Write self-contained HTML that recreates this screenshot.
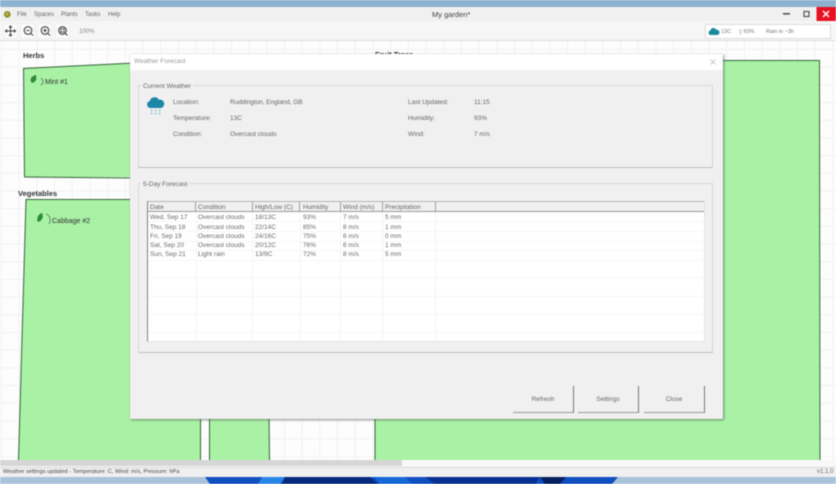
<!DOCTYPE html>
<html lang="en">
<head>
<meta charset="utf-8">
<title>My garden</title>
<style>
html,body{margin:0;padding:0;width:836px;height:484px;overflow:hidden;background:#fff}
body{position:relative;font-family:"Liberation Sans",sans-serif;font-size:6.5px;color:#666}
#root{position:absolute;left:0;top:0;width:836px;height:484px;overflow:hidden;filter:blur(.5px)}
.a{position:absolute;white-space:nowrap}
.lab{position:absolute;white-space:nowrap;line-height:8px}
.box{position:absolute;box-sizing:border-box}
.group{position:absolute;box-sizing:border-box;border:1px solid #d8d8d8;border-bottom-color:#bdbdbd;border-right-color:#d4d4d4;background:#f0f0f0}
.legend{position:absolute;background:#f0f0f0;padding:0 2px;line-height:8px;color:#666;white-space:nowrap}
.btn{position:absolute;box-sizing:border-box;top:386px;height:27px;background:#f0f0f0;border-right:1px solid #777;border-bottom:1px solid #999;text-align:center;line-height:27px;color:#666;font-size:6.5px}
.tool{position:absolute;top:23px;width:15px;height:16px;background:#fbfbfb;border:1px solid #efefef;box-sizing:border-box}
.th{position:absolute;top:203px;height:10px;line-height:10px;color:#666;white-space:nowrap}
.td{position:absolute;line-height:9px;color:#6a6a6a;white-space:nowrap}
.vl{position:absolute;width:1px;background:#a0a0a0;top:202px;height:10px}
.vg{position:absolute;width:1px;background:#f4f4f4;top:212px;height:128px}
.hg{position:absolute;height:1px;background:#f6f6f6;left:148px;width:555px}
</style>
</head>
<body>
<div id="root">

<!-- window chrome -->
<div class="box" style="left:0;top:0;width:836px;height:7px;background:#8db2cf"></div>
<div class="box" style="left:0;top:7px;width:836px;height:14px;background:#f0f0f0"></div>
<div class="box" style="left:0;top:21px;width:836px;height:20px;background:#f6f6f6;border-bottom:1px solid #dedede"></div>

<svg class="a" style="left:3px;top:10px" width="9" height="9" viewBox="0 0 9 9"><circle cx="4.3" cy="4.4" r="3.4" fill="#8b8f2e"/><circle cx="4" cy="4" r="1.4" fill="#c2b94a"/></svg>
<div class="a" style="left:17px;top:11px;line-height:8px;font-size:6px;color:#666">File</div>
<div class="a" style="left:34px;top:11px;line-height:8px;font-size:6px;color:#666">Spaces</div>
<div class="a" style="left:61px;top:11px;line-height:8px;font-size:6px;color:#666">Plants</div>
<div class="a" style="left:85px;top:11px;line-height:8px;font-size:6px;color:#666">Tasks</div>
<div class="a" style="left:108px;top:11px;line-height:8px;font-size:6px;color:#666">Help</div>
<div class="a" style="left:432px;top:9px;line-height:11px;font-size:7.5px;color:#444">My garden*</div>

<svg class="a" style="left:780px;top:7px" width="56" height="14" viewBox="0 0 56 14">
<rect x="3" y="6" width="7" height="1.6" fill="#555"/>
<rect x="24" y="4.5" width="5" height="5" fill="none" stroke="#555" stroke-width="1.2"/>
<rect x="36.5" y="0" width="19.5" height="14" fill="#e81123"/>
<path d="M43 4 L49 10 M49 4 L43 10" stroke="#fff" stroke-width="1.4"/>
</svg>

<!-- toolbar -->
<div class="tool" style="left:3px"></div>
<div class="tool" style="left:20px"></div>
<div class="tool" style="left:37px"></div>
<div class="tool" style="left:55px"></div>
<svg class="a" style="left:3px;top:23px" width="70" height="16" viewBox="0 0 70 16" fill="none" stroke="#444">
<path d="M7.5 3 V13 M2.5 8 H12.5" stroke-width="1"/>
<path d="M6 4.5 L7.5 3 L9 4.5 M6 11.5 L7.5 13 L9 11.5 M4 6.5 L2.5 8 L4 9.5 M11 6.5 L12.5 8 L11 9.5" stroke-width="1"/>
<circle cx="25" cy="7.5" r="3.8" stroke-width="1.1"/><path d="M28 10.5 L30 12.5 M23.2 7.5 H26.8" stroke-width="1.1"/>
<circle cx="42" cy="7.5" r="3.8" stroke-width="1.1"/><path d="M45 10.5 L47 12.5 M40.2 7.5 H43.8 M42 5.7 V9.3" stroke-width="1.1"/>
<circle cx="59.5" cy="7.5" r="3.8" stroke-width="1.1"/><path d="M62.5 10.5 L64.5 12.5" stroke-width="1.1"/><rect x="57.8" y="5.8" width="3.4" height="3.4" stroke-width=".9"/>
</svg>
<div class="a" style="left:79px;top:28px;line-height:8px;font-size:6px;color:#888">100%</div>

<!-- weather status widget -->
<div class="box" style="left:705px;top:24px;width:126px;height:15px;background:#fff;border:1px solid #dcdcdc"></div>
<svg class="a" style="left:708px;top:27px" width="12" height="9" viewBox="0 0 12 9"><path d="M2.5 8 A2.3 2.3 0 0 1 2.3 3.5 A3.2 3.2 0 0 1 8.3 2.8 A2.6 2.6 0 0 1 9.4 8 Z" fill="#1d8a9c"/></svg>
<div class="a" style="left:721px;top:28px;line-height:8px;font-size:5.5px;color:#777">13C</div>
<div class="a" style="left:739px;top:28px;line-height:8px;font-size:5.5px;color:#777">▯ 93%</div>
<div class="a" style="left:766px;top:28px;line-height:8px;font-size:5.5px;color:#777">Rain in ~3h</div>

<!-- canvas with grid -->
<div class="box" style="left:0;top:41px;width:836px;height:420px;background-color:#fdfdfd;background-image:linear-gradient(#f1f1f1 1px,transparent 1px),linear-gradient(90deg,#f1f1f1 1px,transparent 1px);background-size:17.7px 17.7px;background-position:1px 8px"></div>

<svg class="a" style="left:0;top:41px" width="836" height="420" viewBox="0 41 836 420">
<g fill="#a8f1a5" stroke="none">
<polygon points="23.5,68.5 135,63 135,177 24.5,177"/>
<polygon points="26,199.5 205,199.5 200.5,460 18.5,460"/>
<polygon points="209.5,400 269,400 269.5,460 209.5,460"/>
<polygon points="375.5,300 600,60.5 819.5,60.5 820,460 375,460"/>
</g>
<g fill="none" stroke="#35643a" stroke-width="1">
<path d="M24.5 177 L23.5 68.5 L135 63"/>
<path d="M24.5 177 L135 178"/>
<path d="M18.5 460 L26 199.5 L135 199.5"/>
<path d="M200.5 410 V460"/>
<path d="M209.5 410 V460"/>
<path d="M269 410 L269.5 460"/>
<path d="M375 410 V460"/>
<path d="M720 60.5 H819.5 L820 460"/>
</g>
<path d="M32 83 C29 80 31 76 36 75 C37 79 36 82 32 83 Z" fill="#2f8a3a"/>
<path d="M38 222 C36 219 38 214 42 213 C44 217 42 221 38 222 Z" fill="#2f8a3a"/>
<path d="M41 78 C44 80 43 84 41 85" fill="none" stroke="#444" stroke-width=".6"/>
<path d="M46 214 C51 216 51 221 49 224" fill="none" stroke="#444" stroke-width=".6"/>
</svg>
<div class="a" style="left:23px;top:51px;line-height:10px;font-size:7.5px;font-weight:bold;color:#333">Herbs</div>
<div class="a" style="left:18px;top:189px;line-height:10px;font-size:7.5px;font-weight:bold;color:#333">Vegetables</div>
<div class="a" style="left:375px;top:50px;line-height:10px;font-size:7.5px;font-weight:bold;color:#333">Fruit Trees</div>
<div class="a" style="left:45px;top:78px;line-height:9px;font-size:7px;color:#333">Mint #1</div>
<div class="a" style="left:52px;top:217px;line-height:9px;font-size:7px;color:#333">Cabbage #2</div>

<!-- scrollbar & status -->
<div class="box" style="left:0;top:460px;width:836px;height:7px;background:#f8f8f8"></div>
<div class="box" style="left:0;top:460px;width:402px;height:6px;background:#d6d6d6"></div>
<div class="box" style="left:0;top:467px;width:836px;height:10px;background:#f0f0f0;border-top:1px solid #d8d8d8"></div>
<div class="a" style="left:3px;top:468px;line-height:9px;font-size:5.7px;color:#444">Weather settings updated - Temperature: C, Wind: m/s, Pressure: hPa</div>
<div class="a" style="left:817px;top:468px;line-height:9px;font-size:6px;color:#666">v1.1.0</div>

<!-- wallpaper -->
<div class="box" style="left:0;top:477px;width:836px;height:7px;background:#a9c3da"></div>
<svg class="a" style="left:0;top:477px" width="836" height="7" viewBox="0 0 836 7">
<polygon points="205,0 618,0 612,7 210,7" fill="#0f4fc0"/>
<polygon points="262,0 285,0 280,7 258,7" fill="#2a86e6"/>
<polygon points="285,0 370,0 378,7 282,7" fill="#06287e"/>
<polygon points="375,0 405,0 412,7 380,7" fill="#1668d8"/>
<polygon points="425,0 540,0 535,7 435,7" fill="#082f92"/>
<polygon points="540,0 566,0 560,7 545,7" fill="#05205f"/>
</svg>

<!-- dialog -->
<div class="box" style="left:130px;top:54px;width:593px;height:365px;background:#f0f0f0;box-shadow:1px 1px 2px rgba(60,60,60,.55),0 0 1px rgba(120,120,120,.4)"></div>
<div class="box" style="left:130px;top:54px;width:593px;height:16px;background:#fff"></div>
<div class="a" style="left:134px;top:58px;line-height:8px;font-size:6.5px;color:#999">Weather Forecast</div>
<svg class="a" style="left:710px;top:59px" width="6" height="6" viewBox="0 0 6 6"><path d="M.5 .5 L5.5 5.5 M5.5 .5 L.5 5.5" stroke="#bbb" stroke-width=".8"/></svg>

<!-- current weather -->
<div class="group" style="left:138px;top:85px;width:575px;height:83px"></div>
<div class="legend" style="left:141px;top:83px">Current Weather</div>
<svg class="a" style="left:146px;top:96px" width="20" height="20" viewBox="0 0 20 20">
<path d="M4 12 A3.6 3.6 0 0 1 3.8 5 A5 5 0 0 1 13 3.8 A4.2 4.2 0 0 1 15 12 Z" fill="#1d87a8"/>
<g fill="#3c9ab8"><rect x="5" y="14" width="1.2" height="1.2"/><rect x="9" y="14" width="1.2" height="1.2"/><rect x="13" y="14" width="1.2" height="1.2"/><rect x="5" y="17" width="1.2" height="1.2"/><rect x="9" y="17" width="1.2" height="1.2"/><rect x="13" y="17" width="1.2" height="1.2"/></g>
</svg>
<div class="lab" style="left:173px;top:99px">Location:</div>
<div class="lab" style="left:173px;top:115px">Temperature:</div>
<div class="lab" style="left:173px;top:131px">Condition:</div>
<div class="lab" style="left:230px;top:99px;letter-spacing:-.05px">Ruddington, England, GB</div>
<div class="lab" style="left:230px;top:115px">13C</div>
<div class="lab" style="left:230px;top:131px">Overcast clouds</div>
<div class="lab" style="left:408px;top:99px">Last Updated:</div>
<div class="lab" style="left:408px;top:115px">Humidity:</div>
<div class="lab" style="left:408px;top:131px">Wind:</div>
<div class="lab" style="left:474px;top:99px">11:15</div>
<div class="lab" style="left:474px;top:115px">93%</div>
<div class="lab" style="left:474px;top:131px">7 m/s</div>

<!-- forecast -->
<div class="group" style="left:138px;top:183px;width:575px;height:170px"></div>
<div class="legend" style="left:141px;top:181px">5-Day Forecast</div>
<div class="box" style="left:147px;top:201px;width:558px;height:141px;background:#fff;border-left:1px solid #808080;border-top:1px solid #b5b5b5;border-right:1px solid #e4e4e4;border-bottom:1px solid #e4e4e4"></div>
<div class="box" style="left:148px;top:202px;width:556px;height:10px;background:#f0f0f0;border-bottom:1px solid #999"></div>

<div class="vg" style="left:196px"></div><div class="vg" style="left:252px"></div><div class="vg" style="left:300px"></div><div class="vg" style="left:340px"></div><div class="vg" style="left:382px"></div><div class="vg" style="left:435px"></div>
<div class="hg" style="top:221px"></div><div class="hg" style="top:231px"></div><div class="hg" style="top:241px"></div><div class="hg" style="top:250px"></div><div class="hg" style="top:260px"></div><div class="hg" style="top:277px"></div><div class="hg" style="top:296px"></div><div class="hg" style="top:314px"></div><div class="hg" style="top:332px"></div>

<div class="vl" style="left:195px"></div><div class="vl" style="left:252px"></div><div class="vl" style="left:299px"></div><div class="vl" style="left:340px"></div><div class="vl" style="left:382px"></div><div class="vl" style="left:435px"></div>

<div class="th" style="left:150px">Date</div>
<div class="th" style="left:198px">Condition</div>
<div class="th" style="left:255px">High/Low (C)</div>
<div class="th" style="left:303px">Humidity</div>
<div class="th" style="left:343px">Wind (m/s)</div>
<div class="th" style="left:385px">Precipitation</div>

<div class="td" style="left:150px;top:213px">Wed, Sep 17</div><div class="td" style="left:198px;top:213px">Overcast clouds</div><div class="td" style="left:255px;top:213px">18/13C</div><div class="td" style="left:303px;top:213px">93%</div><div class="td" style="left:343px;top:213px">7 m/s</div><div class="td" style="left:385px;top:213px">5 mm</div>
<div class="td" style="left:150px;top:223px">Thu, Sep 18</div><div class="td" style="left:198px;top:223px">Overcast clouds</div><div class="td" style="left:255px;top:223px">22/14C</div><div class="td" style="left:303px;top:223px">85%</div><div class="td" style="left:343px;top:223px">8 m/s</div><div class="td" style="left:385px;top:223px">1 mm</div>
<div class="td" style="left:150px;top:232px">Fri, Sep 19</div><div class="td" style="left:198px;top:232px">Overcast clouds</div><div class="td" style="left:255px;top:232px">24/16C</div><div class="td" style="left:303px;top:232px">75%</div><div class="td" style="left:343px;top:232px">6 m/s</div><div class="td" style="left:385px;top:232px">0 mm</div>
<div class="td" style="left:150px;top:241px">Sat, Sep 20</div><div class="td" style="left:198px;top:241px">Overcast clouds</div><div class="td" style="left:255px;top:241px">20/12C</div><div class="td" style="left:303px;top:241px">76%</div><div class="td" style="left:343px;top:241px">6 m/s</div><div class="td" style="left:385px;top:241px">1 mm</div>
<div class="td" style="left:150px;top:250px">Sun, Sep 21</div><div class="td" style="left:198px;top:250px">Light rain</div><div class="td" style="left:255px;top:250px">13/9C</div><div class="td" style="left:303px;top:250px">72%</div><div class="td" style="left:343px;top:250px">8 m/s</div><div class="td" style="left:385px;top:250px">5 mm</div>

<!-- buttons -->
<div class="btn" style="left:513px;width:61px">Refresh</div>
<div class="btn" style="left:578px;width:61px">Settings</div>
<div class="btn" style="left:644px;width:61px">Close</div>

</div>
</body>
</html>
